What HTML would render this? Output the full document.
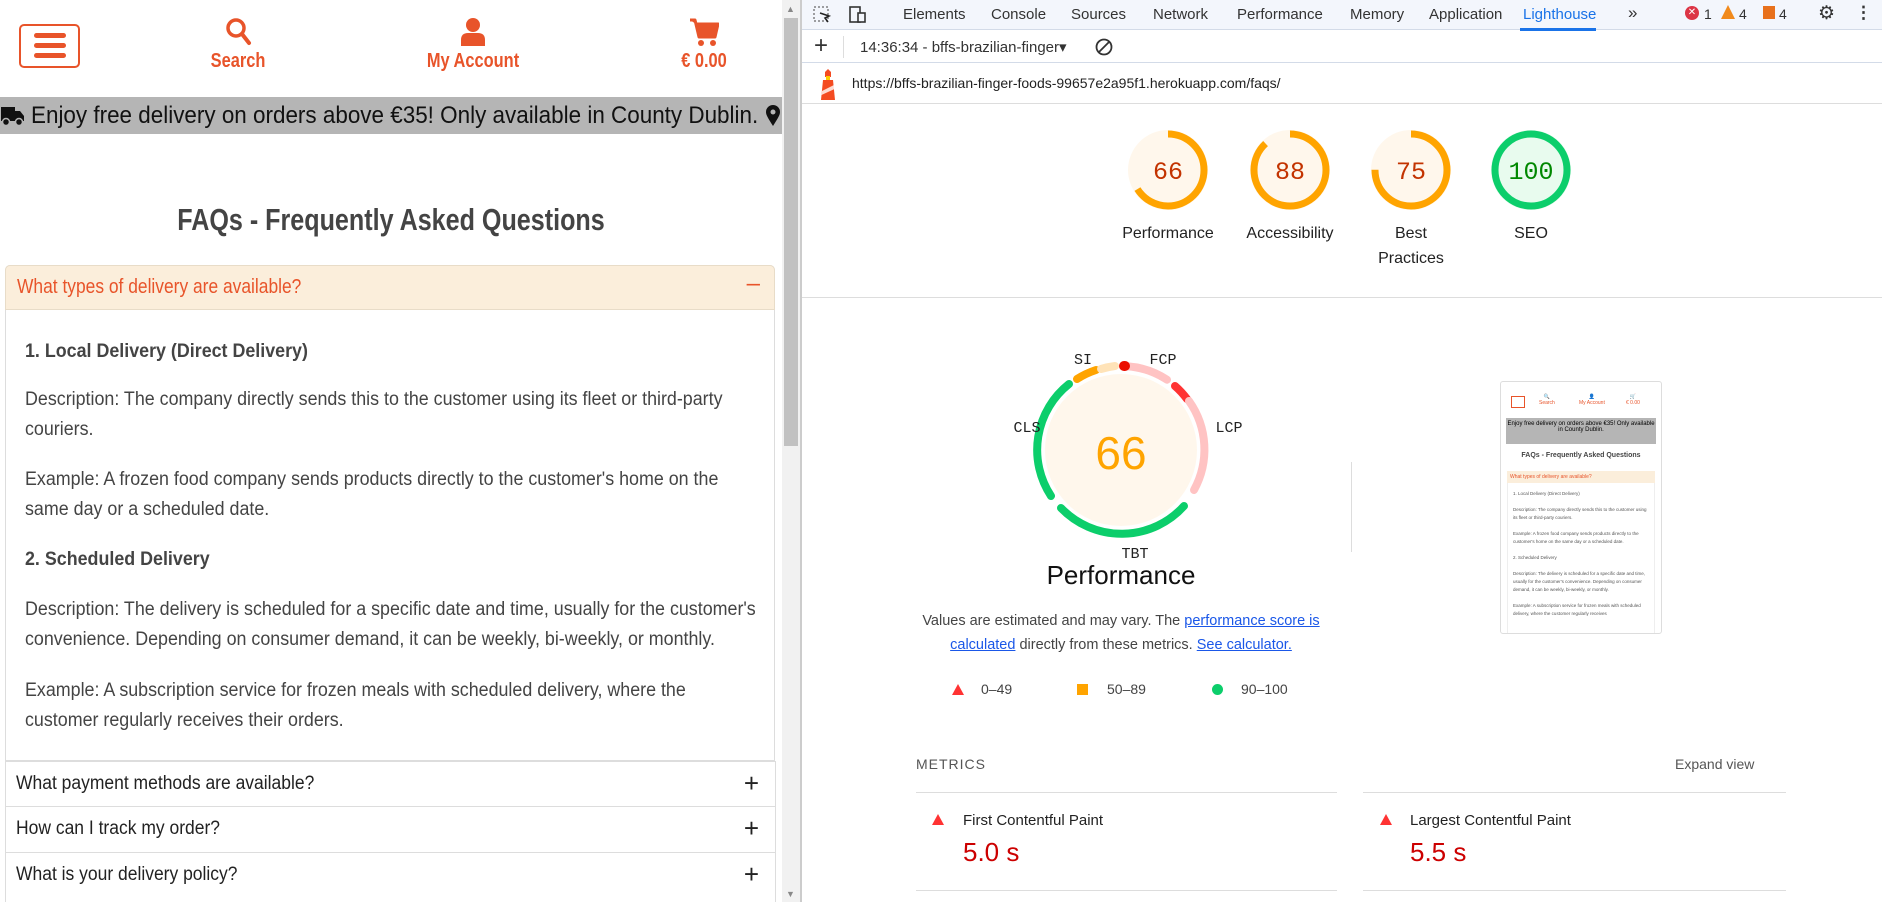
<!DOCTYPE html>
<html><head><meta charset="utf-8"><style>
*{margin:0;padding:0;box-sizing:border-box}
body{width:1882px;height:902px;overflow:hidden;background:#fff;font-family:"Liberation Sans",sans-serif;position:relative}
.a{position:absolute}
.or{color:#e8542a}
.hb{left:19px;top:24px;width:61px;height:44px;border:2px solid #e8542a;border-radius:5px}
.hb i{position:absolute;left:13px;width:32px;height:5px;background:#e8542a;border-radius:3px}
.nav{font-size:20px;font-weight:bold;white-space:nowrap;transform:scaleX(.82);transform-origin:50% 0;text-align:center;width:200px}
.p{position:absolute;left:25px;font-size:19px;color:#444;line-height:30px;width:787px;transform:scaleX(.94);transform-origin:0 0}
.it{position:absolute;left:5px;width:770px;height:46px;border-top:1px solid #ddd;font-size:19px;color:#222;padding:11px 11px}
.it b{font-weight:normal;display:inline-block;transform:scaleX(.92);transform-origin:0 0;white-space:nowrap}
.it span{position:absolute;right:16px;top:6px;font-size:26px;font-weight:300}
.tab{position:absolute;top:6px;font-size:15px;color:#333}
.gl{position:absolute;font-size:16px;color:#222;text-align:center;width:140px;line-height:25px}
</style></head><body>
<div class="a hb"><i style="top:7px"></i><i style="top:17px"></i><i style="top:27px"></i></div>
<svg class="a" style="left:225px;top:17px" width="28" height="30" viewBox="0 0 28 30"><circle cx="11" cy="11" r="8" fill="none" stroke="#e8542a" stroke-width="3.5"/><line x1="17" y1="17" x2="24" y2="26" stroke="#e8542a" stroke-width="4" stroke-linecap="round"/></svg>
<div class="a nav or" style="left:138px;top:50px">Search</div>
<svg class="a" style="left:460px;top:17px" width="26" height="30" viewBox="0 0 26 30"><circle cx="13" cy="8" r="7" fill="#e8542a"/><path d="M1 29 V23 Q1 16 8 16 H18 Q25 16 25 23 V29Z" fill="#e8542a"/></svg>
<div class="a nav or" style="left:373px;top:50px">My Account</div>
<svg class="a" style="left:689px;top:17px" width="30" height="30" viewBox="0 0 30 30"><path d="M1 3 H6 L10 20 H26 L29 7 H7" fill="#e8542a" stroke="#e8542a" stroke-width="3" stroke-linejoin="round"/><circle cx="12" cy="26" r="3" fill="#e8542a"/><circle cx="24" cy="26" r="3" fill="#e8542a"/></svg>
<div class="a nav or" style="left:604px;top:50px">€ 0.00</div>
<div class="a" style="left:0;top:97px;width:782px;height:37px;background:#b5b5b5;overflow:hidden">
<svg class="a" style="left:1px;top:8px" width="24" height="22" viewBox="0 0 24 22"><path d="M0 2 H14 V16 H0Z M14 6 H19 L23 11 V16 H14Z" fill="#111"/><circle cx="5" cy="17" r="3.5" fill="#111" stroke="#b5b5b5" stroke-width="1.5"/><circle cx="18" cy="17" r="3.5" fill="#111" stroke="#b5b5b5" stroke-width="1.5"/></svg>
<div class="a" style="left:31px;top:0;font-size:24px;color:#111;line-height:37px;white-space:nowrap;transform:scaleX(.935);transform-origin:0 0">Enjoy free delivery on orders above €35! Only available in County Dublin.</div>
<svg class="a" style="left:766px;top:8px" width="14" height="22" viewBox="0 0 14 22"><path d="M7 21 C2 13 0 10 0 7 A7 7 0 0 1 14 7 C14 10 12 13 7 21Z" fill="#111"/><circle cx="7" cy="7" r="2.5" fill="#b5b5b5"/></svg>
</div>
<div class="a" style="left:-100px;top:202px;width:982px;text-align:center;font-size:31px;font-weight:bold;color:#444;transform:scaleX(.81);transform-origin:50% 0">FAQs - Frequently Asked Questions</div>
<div class="a" style="left:5px;top:265px;width:770px;height:496px;border:1px solid #ddd;border-radius:5px 5px 0 0"></div>
<div class="a or" style="left:5px;top:265px;width:770px;height:45px;background:#fbeedb;border:1px solid #e8dcc8;border-radius:5px 5px 0 0;font-size:20px;padding:10px 11px"><span style="display:inline-block;transform:scaleX(.87);transform-origin:0 0;white-space:nowrap">What types of delivery are available?</span><span style="position:absolute;right:14px;top:4px;font-size:24px">–</span></div>
<div class="p" style="top:337px;font-weight:bold">1. Local Delivery (Direct Delivery)</div>
<div class="p" style="top:385px">Description: The company directly sends this to the customer using its fleet or third-party<br>couriers.</div>
<div class="p" style="top:465px">Example: A frozen food company sends products directly to the customer's home on the<br>same day or a scheduled date.</div>
<div class="p" style="top:545px;font-weight:bold">2. Scheduled Delivery</div>
<div class="p" style="top:595px">Description: The delivery is scheduled for a specific date and time, usually for the customer's<br>convenience. Depending on consumer demand, it can be weekly, bi-weekly, or monthly.</div>
<div class="p" style="top:676px">Example: A subscription service for frozen meals with scheduled delivery, where the<br>customer regularly receives their orders.</div>
<div class="it" style="top:761px"><b>What payment methods are available?</b><span>+</span></div>
<div class="it" style="top:806px"><b>How can I track my order?</b><span>+</span></div>
<div class="it" style="top:852px"><b>What is your delivery policy?</b><span>+</span></div>
<div class="a" style="left:5px;top:761px;width:1px;height:141px;background:#ddd"></div>
<div class="a" style="left:775px;top:761px;width:1px;height:141px;background:#ddd"></div>
<div class="a" style="left:782px;top:0;width:18px;height:902px;background:#f1f1f1"></div>
<div class="a" style="left:784px;top:18px;width:14px;height:428px;background:#c1c1c1"></div>
<div class="a" style="left:786px;top:4px;font-size:9px;color:#888">▲</div>
<div class="a" style="left:786px;top:889px;font-size:9px;color:#888">▼</div>
<div class="a" style="left:800px;top:0;width:2px;height:902px;background:#ccc"></div>
<div class="a" style="left:802px;top:0;width:1080px;height:30px;background:#f3f6fc;border-bottom:1px solid #d3dbe8"></div>
<svg class="a" style="left:812px;top:5px" width="20" height="20"><rect x="2" y="2" width="14" height="14" fill="none" stroke="#444" stroke-dasharray="2 2"/><path d="M8 8 L17 11 L13 13 L16 17" stroke="#222" stroke-width="1.6" fill="none"/></svg>
<svg class="a" style="left:846px;top:5px" width="22" height="20"><rect x="4" y="2" width="10" height="15" fill="none" stroke="#333" stroke-width="1.6"/><rect x="12" y="8" width="7" height="9" fill="#f3f6fc" stroke="#333" stroke-width="1.6"/></svg>
<div class="tab" style="left:903px">Elements</div>
<div class="tab" style="left:991px">Console</div>
<div class="tab" style="left:1071px">Sources</div>
<div class="tab" style="left:1153px">Network</div>
<div class="tab" style="left:1237px">Performance</div>
<div class="tab" style="left:1350px">Memory</div>
<div class="tab" style="left:1429px">Application</div>
<div class="tab" style="left:1523px;color:#1a73e8">Lighthouse</div>
<div class="a" style="left:1520px;top:28px;width:76px;height:3px;background:#1a73e8"></div>
<div class="tab" style="left:1628px;font-size:17px;top:3px">»</div>
<div class="a" style="left:1685px;top:6px;width:14px;height:14px;border-radius:7px;background:#dc3545;color:#fff;font-size:10px;text-align:center;line-height:14px">✕</div>
<div class="tab" style="left:1704px;font-size:14px">1</div>
<div class="a" style="left:1721px;top:5px;width:0;height:0;border-left:7px solid transparent;border-right:7px solid transparent;border-bottom:14px solid #f18a1c"></div>
<div class="tab" style="left:1739px;font-size:14px">4</div>
<div class="a" style="left:1763px;top:6px;width:12px;height:13px;background:#e8711c"></div>
<div class="tab" style="left:1779px;font-size:14px">4</div>
<div class="tab" style="left:1818px;font-size:19px;top:2px">⚙</div>
<div class="tab" style="left:1855px;font-size:17px;top:3px;font-weight:bold">⋮</div>
<div class="a" style="left:802px;top:31px;width:1080px;height:32px;border-bottom:1px solid #d3dbe8"></div>
<div class="a" style="left:814px;top:32px;font-size:24px;color:#333">+</div>
<div class="a" style="left:843px;top:36px;width:1px;height:22px;background:#ddd"></div>
<div class="a" style="left:860px;top:38px;font-size:15px;color:#333">14:36:34 - bffs-brazilian-finger▾</div>
<svg class="a" style="left:1094px;top:37px" width="20" height="20"><circle cx="10" cy="10" r="7.5" fill="none" stroke="#333" stroke-width="1.8"/><line x1="5" y1="15" x2="15" y2="5" stroke="#333" stroke-width="1.8"/></svg>
<svg class="a" style="left:818px;top:69px" width="20" height="32"><path d="M7 3 L10 0 L13 3 V8 H7Z" fill="#f44b21"/><rect x="8" y="7" width="4" height="4" fill="#fc0"/><path d="M5 11 H15 L17 31 H3Z" fill="#f44b21"/><path d="M4 22 L16 16 L16.5 20 L3.5 26Z" fill="#fff" opacity=".8"/></svg>
<div class="a" style="left:852px;top:75px;font-size:14px;color:#222">https://bffs-brazilian-finger-foods-99657e2a95f1.herokuapp.com/faqs/</div>
<div class="a" style="left:802px;top:103px;width:1080px;height:1px;background:#ddd"></div>
<svg class="a" style="left:1120px;top:124px" width="460" height="92">
<g font-family="Liberation Mono,monospace" font-size="25" text-anchor="middle">
<g transform="translate(48,46)"><circle r="40" fill="#fff7ec"/><circle r="36" fill="none" stroke="#ffa400" stroke-width="7" stroke-dasharray="149.3 226.2" transform="rotate(-90)"/><text y="9" fill="#c33300">66</text></g>
<g transform="translate(170,46)"><circle r="40" fill="#fff7ec"/><circle r="36" fill="none" stroke="#ffa400" stroke-width="7" stroke-dasharray="199 226.2" transform="rotate(-90)"/><text y="9" fill="#c33300">88</text></g>
<g transform="translate(291,46)"><circle r="40" fill="#fff7ec"/><circle r="36" fill="none" stroke="#ffa400" stroke-width="7" stroke-dasharray="169.6 226.2" transform="rotate(-90)"/><text y="9" fill="#c33300">75</text></g>
<g transform="translate(411,46)"><circle r="40" fill="#e8fbee"/><circle r="36" fill="none" stroke="#0cce6b" stroke-width="7"/><text y="9" fill="#008800">100</text></g>
</g></svg>
<div class="gl" style="left:1098px;top:221px">Performance</div>
<div class="gl" style="left:1220px;top:221px">Accessibility</div>
<div class="gl" style="left:1341px;top:221px">Best<br>Practices</div>
<div class="gl" style="left:1461px;top:221px">SEO</div>
<div class="a" style="left:802px;top:297px;width:1080px;height:1px;background:#ddd"></div>
<svg class="a" style="left:991px;top:340px" width="260" height="230">
<g transform="translate(130,110)">
<circle r="76" fill="#fff7ec"/>
<g fill="none" stroke-width="8" stroke-linecap="round">
<path d="M5.9 -83.8 A84 84 0 0 1 46 -70.3" stroke="#ffc3c3"/>
<path d="M3 -84 A84 84 0 0 1 4 -84" stroke="#eb0f00" stroke-width="10"/>
<path d="M54 -64 A84 84 0 0 1 66 -51" stroke="#ff3333"/>
<path d="M68 -49 A84 84 0 0 1 73 40" stroke="#ffc3c3"/>
<path d="M63 56 A84 84 0 0 1 -60 58" stroke="#0cce6b"/>
<path d="M-70 46 A84 84 0 0 1 -52 -66" stroke="#0cce6b"/>
<path d="M-44 -71 A84 84 0 0 1 -25 -80" stroke="#ffa400"/>
<path d="M-20 -81 A84 84 0 0 1 -6 -84" stroke="#ffe3b8"/>
</g>
<text y="19" text-anchor="middle" font-size="46" fill="#ffa400" font-family="Liberation Sans,sans-serif">66</text>
</g>
<g font-family="Liberation Mono,monospace" font-size="15" fill="#222" text-anchor="middle">
<text x="92" y="24">SI</text><text x="172" y="24">FCP</text><text x="36" y="92">CLS</text><text x="238" y="92">LCP</text><text x="144" y="218">TBT</text>
</g></svg>
<div class="a" style="left:1011px;top:560px;width:220px;text-align:center;font-size:26px;color:#111">Performance</div>
<div class="a" style="left:911px;top:609px;width:420px;text-align:center;font-size:14.5px;color:#444;line-height:24px">Values are estimated and may vary. The <u style="color:#1a57e8">performance score is calculated</u> directly from these metrics. <u style="color:#1a57e8">See calculator.</u></div>
<div class="a" style="left:952px;top:684px;width:0;height:0;border-left:6px solid transparent;border-right:6px solid transparent;border-bottom:11px solid #f33"></div>
<div class="a" style="left:981px;top:681px;font-size:14px;color:#444">0–49</div>
<div class="a" style="left:1077px;top:684px;width:11px;height:11px;background:#ffa400"></div>
<div class="a" style="left:1107px;top:681px;font-size:14px;color:#444">50–89</div>
<div class="a" style="left:1212px;top:684px;width:11px;height:11px;border-radius:6px;background:#0cce6b"></div>
<div class="a" style="left:1241px;top:681px;font-size:14px;color:#444">90–100</div>
<div class="a" style="left:1351px;top:462px;width:1px;height:90px;background:#ddd"></div>
<div class="a" style="left:1500px;top:381px;width:162px;height:253px;border:1px solid #ddd;border-radius:3px;overflow:hidden;background:#fff">
<div class="a" style="left:10px;top:14px;width:14px;height:12px;border:1px solid #e8542a"></div>
<div class="a or" style="left:38px;top:12px;font-size:5px;text-align:center">🔍<br>Search</div>
<div class="a or" style="left:78px;top:12px;font-size:5px;text-align:center">👤<br>My Account</div>
<div class="a or" style="left:125px;top:12px;font-size:5px;text-align:center">🛒<br>€ 0.00</div>
<div class="a" style="left:5px;top:36px;width:150px;height:26px;background:#b5b5b5;font-size:6px;text-align:center;padding-top:3px">Enjoy free delivery on orders above €35! Only available in County Dublin.</div>
<div class="a" style="left:0;top:70px;width:160px;text-align:center;font-size:7px;color:#444;font-weight:bold">FAQs - Frequently Asked Questions</div>
<div class="a" style="left:6px;top:89px;width:148px;height:170px;border:1px solid #eee"></div>
<div class="a or" style="left:6px;top:89px;width:148px;height:12px;background:#fbeedb;font-size:5px;padding:3px">What types of delivery are available?</div>
<div class="a" style="left:12px;top:108px;width:136px;font-size:4.5px;color:#555;line-height:8px">1. Local Delivery (Direct Delivery)<br><br>Description: The company directly sends this to the customer using its fleet or third-party couriers.<br><br>Example: A frozen food company sends products directly to the customer's home on the same day or a scheduled date.<br><br>2. Scheduled Delivery<br><br>Description: The delivery is scheduled for a specific date and time, usually for the customer's convenience. Depending on consumer demand, it can be weekly, bi-weekly, or monthly.<br><br>Example: A subscription service for frozen meals with scheduled delivery, where the customer regularly receives</div>
</div>
<div class="a" style="left:916px;top:756px;font-size:14px;letter-spacing:1px;color:#555">METRICS</div>
<div class="a" style="left:1675px;top:756px;font-size:14px;color:#555">Expand view</div>
<div class="a" style="left:916px;top:792px;width:421px;height:1px;background:#ddd"></div>
<div class="a" style="left:1363px;top:792px;width:423px;height:1px;background:#ddd"></div>
<div class="a" style="left:932px;top:814px;width:0;height:0;border-left:6px solid transparent;border-right:6px solid transparent;border-bottom:11px solid #f33"></div>
<div class="a" style="left:963px;top:812px;font-size:15px;color:#222">First Contentful Paint</div>
<div class="a" style="left:963px;top:837px;font-size:26px;color:#c00">5.0 s</div>
<div class="a" style="left:1380px;top:814px;width:0;height:0;border-left:6px solid transparent;border-right:6px solid transparent;border-bottom:11px solid #f33"></div>
<div class="a" style="left:1410px;top:812px;font-size:15px;color:#222">Largest Contentful Paint</div>
<div class="a" style="left:1410px;top:837px;font-size:26px;color:#c00">5.5 s</div>
<div class="a" style="left:916px;top:890px;width:421px;height:1px;background:#ddd"></div>
<div class="a" style="left:1363px;top:890px;width:423px;height:1px;background:#ddd"></div>
</body></html>
